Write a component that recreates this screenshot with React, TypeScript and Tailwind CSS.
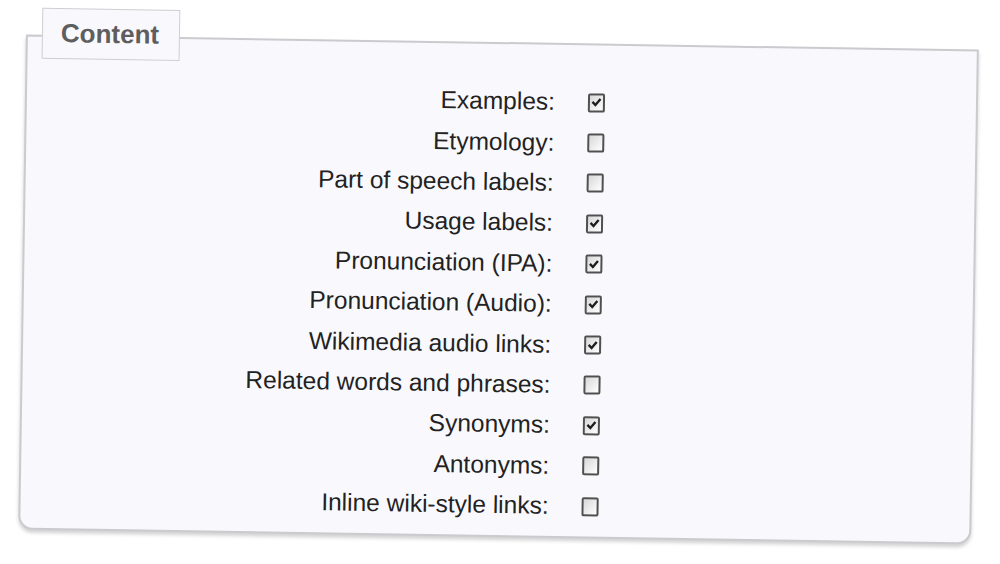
const options = [
  { label: "Examples:", checked: true },
  { label: "Etymology:", checked: false },
  { label: "Part of speech labels:", checked: false },
  { label: "Usage labels:", checked: true },
  { label: "Pronunciation (IPA):", checked: true },
  { label: "Pronunciation (Audio):", checked: true },
  { label: "Wikimedia audio links:", checked: true },
  { label: "Related words and phrases:", checked: false },
  { label: "Synonyms:", checked: true },
  { label: "Antonyms:", checked: false },
  { label: "Inline wiki-style links:", checked: false },
];

function Checkbox({ checked }: { checked: boolean }) {
  return (
    <span className="flex h-[19px] w-[17px] items-center justify-center rounded-[2px] border-2 border-[#505050] bg-gradient-to-br from-[#d8d8d8] to-[#ffffff]">
      {checked && (
        <svg width="11" height="10" viewBox="0 0 11 10">
          <path d="M1.5 4.5 L4.5 7.5 L9.5 1.5" fill="none" stroke="#1e1e1e" strokeWidth="2.4" />
        </svg>
      )}
    </span>
  );
}

export default function App() {
  return (
    <div className="h-[564px] w-[1000px] overflow-hidden bg-white pt-[42px] pl-[22px] font-['Liberation_Sans',Arial,sans-serif]">
      <div className="relative h-[495px] w-[953px] rotate-[0.9deg] rounded-b-[14px] border-2 border-[#cbcbcf] bg-[#f9f9fd] pt-[37px] shadow-[0_3px_4px_rgba(0,0,0,0.18)]">
        {/* Legend */}
        <div className="absolute -top-[29px] left-[14px] flex h-[51px] w-[138px] items-center border-[1.5px] border-[#cfcfd3] bg-[#f9f9fd] pl-[18px]">
          <span className="text-[26px] font-bold text-[#5e5e5e]">Content</span>
        </div>

        {/* Options */}
        <div className="flex flex-col">
          {options.map((opt) => (
            <div key={opt.label} className="flex h-[40.4px] items-center">
              <span className="w-[528px] text-right text-[24.5px] leading-[40px] text-[#222]">
                {opt.label}
              </span>
              <span className="ml-[33px]">
                <Checkbox checked={opt.checked} />
              </span>
            </div>
          ))}
        </div>
      </div>
    </div>
  );
}
